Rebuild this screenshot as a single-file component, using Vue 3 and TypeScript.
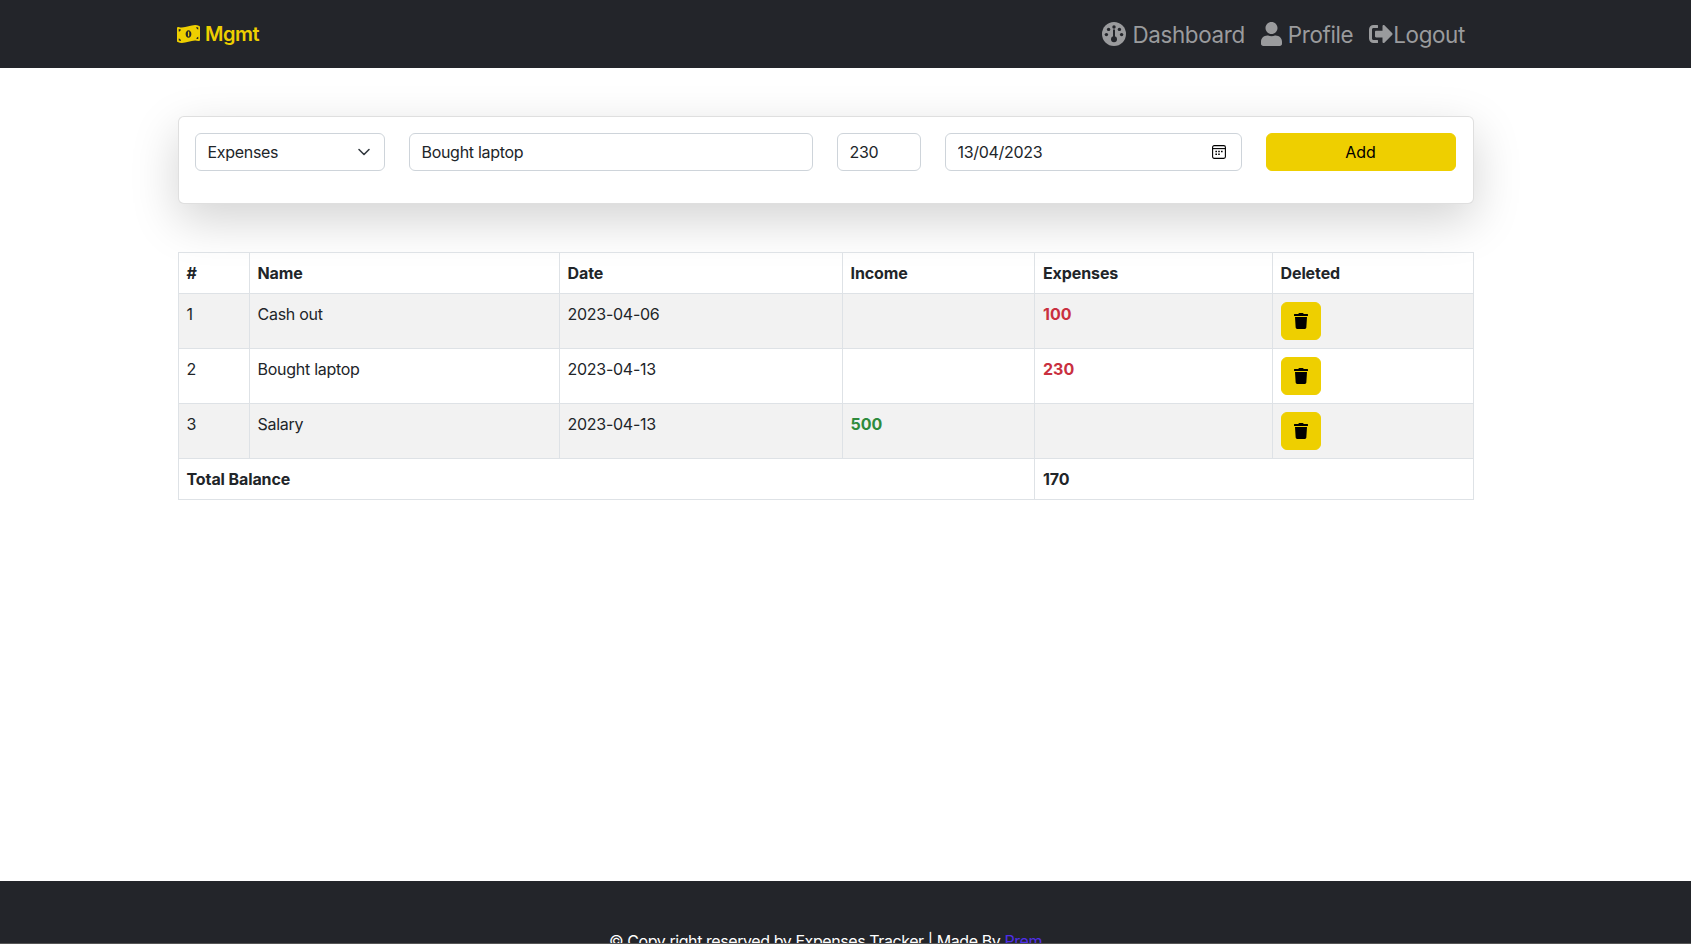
<script setup lang="ts">
interface Row {
  id: number
  name: string
  date: string
  income?: number
  expense?: number
}

const rows: Row[] = [
  { id: 1, name: 'Cash out', date: '2023-04-06', expense: 100 },
  { id: 2, name: 'Bought laptop', date: '2023-04-13', expense: 230 },
  { id: 3, name: 'Salary', date: '2023-04-13', income: 500 },
]

const trashPath =
  'M432 32H312l-9.4-18.7A24 24 0 0 0 281.1 0H166.8a23.72 23.72 0 0 0-21.4 13.3L136 32H16A16 16 0 0 0 0 48v32a16 16 0 0 0 16 16h416a16 16 0 0 0 16-16V48a16 16 0 0 0-16-16zM53.2 467a48 48 0 0 0 47.9 45h245.8a48 48 0 0 0 47.9-45L416 128H32z'
</script>

<template>
  <div class="page">
    <header class="navbar">
      <a class="brand" href="#">
        <svg class="brand__icon" viewBox="0 32 640 448" preserveAspectRatio="none" fill="currentColor">
          <path d="M621.16 54.46C582.37 38.19 543.55 32 504.75 32c-123.17-.01-246.33 62.34-369.5 62.34-30.89 0-61.76-3.92-92.65-13.72-3.47-1.1-6.95-1.62-10.35-1.62C15.04 79 0 92.32 0 110.81v317.26c0 12.63 7.23 24.6 18.84 29.46C57.63 473.81 96.45 480 135.25 480c123.17 0 246.34-62.35 369.51-62.35 30.89 0 61.76 3.92 92.65 13.72 3.47 1.1 6.95 1.62 10.35 1.62 17.21 0 32.25-13.32 32.25-31.81V83.93c-.01-12.64-7.24-24.6-18.85-29.47zM48 132.22c20.12 5.04 41.12 7.57 62.72 8.93C104.84 170.54 79 192.69 48 192.69v-60.47zm0 285v-47.78c34.37 0 62.18 27.27 63.71 61.4-22.53-1.81-43.59-6.31-63.71-13.62zM320 352c-44.19 0-80-42.99-80-96 0-53.02 35.82-96 80-96s80 42.98 80 96c0 53.03-35.83 96-80 96zm272 27.78c-17.52-4.39-35.71-6.85-54.32-8.44 5.87-26.08 27.5-45.88 54.32-49.28v57.72zm0-236.11c-30.89-3.91-54.86-29.7-55.81-61.55 19.54 2.17 38.09 6.23 55.81 12.66v48.89z" />
          <rect x="304" y="196" width="36" height="120" />
        </svg>
        <span>Mgmt</span>
      </a>
      <nav class="nav">
        <a class="nav__link" href="#">
          <svg class="nav__icon" viewBox="0 0 24 24">
            <circle cx="12" cy="12" r="12" fill="currentColor" />
            <g fill="#23252a">
              <circle cx="12" cy="5" r="1.7" />
              <circle cx="6.6" cy="7.4" r="1.7" />
              <circle cx="17.4" cy="7.4" r="1.7" />
              <circle cx="4.4" cy="12.6" r="1.7" />
              <circle cx="19.6" cy="12.6" r="1.7" />
              <rect x="11" y="7.5" width="2" height="9" />
              <circle cx="12" cy="17.2" r="3" />
            </g>
          </svg>
          <span>Dashboard</span>
        </a>
        <a class="nav__link" href="#">
          <svg class="nav__icon nav__icon--user" viewBox="0 0 448 512" fill="currentColor">
            <path d="M224 256c70.7 0 128-57.3 128-128S294.7 0 224 0 96 57.3 96 128s57.3 128 128 128zm89.6 32h-16.7c-22.2 10.2-46.9 16-72.9 16s-50.6-5.8-72.9-16h-16.7C60.2 288 0 348.2 0 422.4V464c0 26.5 21.5 48 48 48h352c26.5 0 48-21.5 48-48v-41.6c0-74.2-60.2-134.4-134.4-134.4z" />
          </svg>
          <span>Profile</span>
        </a>
        <a class="nav__link nav__link--tight" href="#">
          <svg class="nav__icon" viewBox="0 0 512 512" fill="currentColor">
            <path d="M497 273L329 441c-15 15-41 4.5-41-17v-96H152c-13.3 0-24-10.7-24-24v-96c0-13.3 10.7-24 24-24h136V88c0-21.4 25.9-32 41-17l168 168c9.3 9.4 9.3 24.6 0 34zM192 436v-40c0-6.6-5.4-12-12-12H96c-17.7 0-32-14.3-32-32V160c0-17.7 14.3-32 32-32h84c6.6 0 12-5.4 12-12V76c0-6.6-5.4-12-12-12H96c-53 0-96 43-96 96v192c0 53 43 96 96 96h84c6.6 0 12-5.4 12-12z" />
          </svg>
          <span>Logout</span>
        </a>
      </nav>
    </header>

    <main class="content">
      <form class="card" @submit.prevent>
        <div class="field">
          <select class="control">
            <option>Expenses</option>
            <option>Income</option>
          </select>
          <svg class="field__icon field__icon--chevron" viewBox="0 0 16 16" fill="none" stroke="#343a40" stroke-width="1.6" stroke-linecap="round" stroke-linejoin="round">
            <path d="m3 5.5 5 5 5-5" />
          </svg>
        </div>
        <input class="control" type="text" value="Bought laptop" />
        <input class="control" type="text" value="230" />
        <div class="field">
          <input class="control" type="text" value="13/04/2023" />
          <svg class="field__icon field__icon--calendar" viewBox="0 0 14 14" fill="none" stroke="#000" stroke-width="1.1">
            <rect x="0.6" y="0.6" width="12.8" height="12.8" rx="1.6" />
            <path d="M0.6 3.6h12.8" />
            <path d="M3.4 6.4h1.6M6.2 6.4h1.6M9 6.4h1.6M3.4 9.2h1.6M6.2 9.2h1.6" stroke-width="1.5" />
          </svg>
        </div>
        <button class="add-btn" type="submit">Add</button>
      </form>

      <table class="ledger">
        <colgroup>
          <col style="width: 71px" />
          <col style="width: 310px" />
          <col style="width: 283px" />
          <col style="width: 192.5px" />
          <col style="width: 237.5px" />
          <col />
        </colgroup>
        <thead>
          <tr>
            <th>#</th>
            <th>Name</th>
            <th>Date</th>
            <th>Income</th>
            <th>Expenses</th>
            <th>Deleted</th>
          </tr>
        </thead>
        <tbody>
          <tr v-for="row in rows" :key="row.id" class="ledger__row">
            <td>{{ row.id }}</td>
            <td>{{ row.name }}</td>
            <td>{{ row.date }}</td>
            <td class="amount amount--in">{{ row.income }}</td>
            <td class="amount amount--out">{{ row.expense }}</td>
            <td>
              <button class="delete-btn" type="button" aria-label="Delete">
                <svg viewBox="0 0 448 512" fill="currentColor"><path :d="trashPath" /></svg>
              </button>
            </td>
          </tr>
          <tr>
            <th colspan="4">Total Balance</th>
            <th colspan="2">170</th>
          </tr>
        </tbody>
      </table>
    </main>

    <footer class="footer">
      <p>© Copy right reserved by Expenses Tracker | Made By <a href="#">Prem</a></p>
    </footer>
  </div>
</template>

<style>
html,
body {
  overflow: hidden;
}
</style>

<style scoped>
.page {
  color: #212529;
  display: flex;
  flex-direction: column;
  font-family: Inter, "Liberation Sans", sans-serif;
  font-size: 16px;
  height: 944px;
  line-height: 24px;
  overflow: hidden;
}

.navbar {
  align-items: center;
  background: #23252a;
  display: flex;
  flex: none;
  height: 68px;
  justify-content: space-between;
  padding: 0 218px 0 177px;
}

.brand {
  align-items: center;
  color: #eecf00;
  display: flex;
  font-size: 20px;
  font-weight: 600;
  gap: 5px;
  letter-spacing: -0.5px;
  text-decoration: none;
}

.brand__icon {
  height: 18px;
  width: 23px;
}

.nav {
  display: flex;
}

.nav__link {
  align-items: center;
  color: #9a9b9d;
  display: flex;
  font-size: 22.4px;
  gap: 6px;
  letter-spacing: -0.35px;
  line-height: 36px;
  padding: 8px;
  text-decoration: none;
}

.nav__link span {
  padding-top: 2px;
}

.nav__link--tight {
  gap: 0;
}

.nav__icon {
  flex: none;
  height: 24px;
  width: 24px;
}

.nav__icon--user {
  width: 21px;
}

.content {
  box-sizing: content-box;
  flex: 1;
  padding: 48px 0 0 177.5px;
  width: 1296px;
}

.card {
  background: #fff;
  border: 1px solid rgba(0, 0, 0, 0.125);
  border-radius: 6px;
  box-shadow: 0 16px 48px rgba(0, 0, 0, 0.175);
  box-sizing: border-box;
  display: grid;
  gap: 24px;
  grid-template-columns: 190px 404px 84px 297px 190px;
  height: 88px;
  margin-bottom: 48px;
  padding: 16px;
}

.field {
  position: relative;
}

.field__icon {
  pointer-events: none;
  position: absolute;
}

.field__icon--chevron {
  height: 16px;
  right: 13px;
  top: 11px;
  width: 16px;
}

.field__icon--calendar {
  height: 14px;
  right: 16px;
  top: 12px;
  width: 14px;
}

.control {
  appearance: none;
  background: #fff;
  border: 1px solid #ced4da;
  border-radius: 6px;
  box-sizing: border-box;
  color: #212529;
  display: block;
  font: inherit;
  height: 38px;
  letter-spacing: -0.3px;
  outline: none;
  padding: 6px 12px;
  width: 100%;
}

.add-btn {
  background: #eecf00;
  border: 1px solid #eecf00;
  border-radius: 6px;
  color: #000;
  font: inherit;
  height: 38px;
}

.ledger {
  border-collapse: collapse;
  table-layout: fixed;
  width: 100%;
}

.ledger th,
.ledger td {
  border: 1px solid #dee2e6;
  padding: 8px;
  text-align: left;
  vertical-align: top;
}

.ledger th {
  font-weight: 700;
  letter-spacing: -0.1px;
}

.ledger td {
  letter-spacing: -0.27px;
}

.ledger__row:nth-child(odd) {
  background: #f2f2f2;
}

.ledger td.amount {
  font-weight: 700;
  letter-spacing: 0;
}

.amount--in {
  color: #2e8b3d;
}

.amount--out {
  color: #c9303f;
}

.delete-btn {
  align-items: center;
  background: #eecf00;
  border: 1px solid #eecf00;
  border-radius: 6px;
  color: #000;
  display: flex;
  height: 38px;
  justify-content: center;
  padding: 0;
  width: 40px;
}

.delete-btn svg {
  height: 16px;
  width: 14px;
}

.footer {
  background: #23252a;
  border-bottom: 1px solid #555;
  box-sizing: border-box;
  color: #fff;
  flex: none;
  height: 63px;
  letter-spacing: -0.42px;
  overflow: hidden;
  padding-top: 48px;
  text-align: center;
}

.footer p {
  margin: 0;
  padding-right: 40px;
}

.footer a {
  color: #4f2ee8;
  text-decoration: none;
}
</style>
